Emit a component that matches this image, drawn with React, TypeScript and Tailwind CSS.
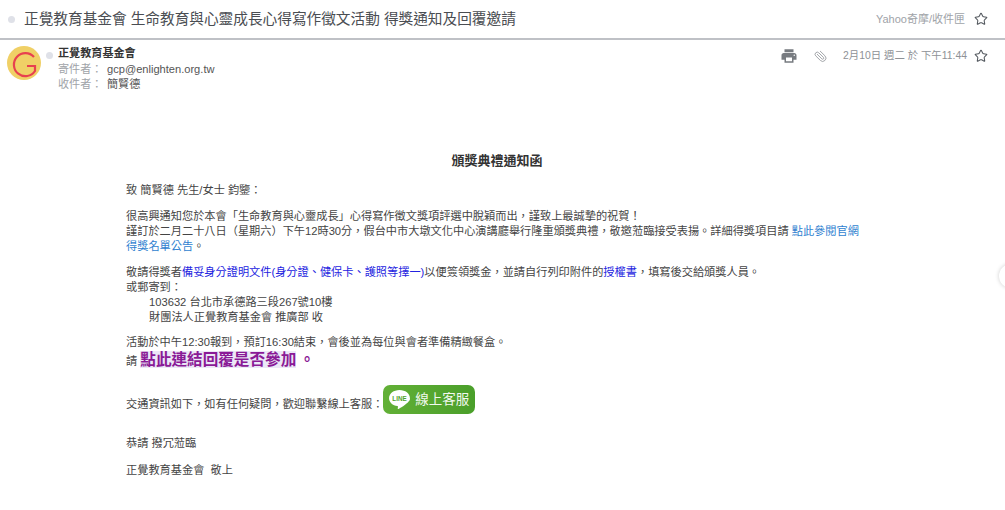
import { Star, Paperclip } from 'lucide-react';

const font = "font-['Liberation_Sans','Noto_Sans_CJK_TC',sans-serif]";

function Avatar() {
  return (
    <svg width="34" height="34" viewBox="0 0 34 34" className="shrink-0">
      <circle cx="17" cy="17" r="17" fill="#f0d066" />
      <path d="M27 11 A11.5 11.500 0 1 0 28 25 L28 20 L20 20" fill="none" stroke="#e8404f" strokeWidth="2.200" />
    </svg>
  );
}

function PrintIcon() {
  return (
    <svg width="18" height="18" viewBox="0 0 24 24" fill="#777b80">
      <path d="M19 8H5c-1.660 0-3 1.340-3 3v6h4v4h12v-4h4v-6c0-1.660-1.340-3-3-3zm-3 11H8v-5h8v5zm3-7c-.55 0-1-.45-1-1s.45-1 1-1 1 .45 1 1-.45 1-1 1zm-1-9H6v4h12V3z" />
    </svg>
  );
}

function LineButton() {
  return (
    <span className="inline-flex items-center w-[92px] h-[29px] rounded-[7px] bg-linear-to-r from-[#62b036] to-[#4a9f2a] pl-[5px] gap-[4px] text-[#f2f8ee] text-[13.500px] align-bottom">
      <svg width="23" height="23" viewBox="0 0 22 22" className="shrink-0">
        <path d="M11 2C5.500 2 1 5.400 1 9.700c0 3.800 3.400 6.900 8 7.600.5.1.6.4.5.8l-.2 1.500c0 .4.3.7.8.4 1.500-.8 7.800-4.600 9.800-7.400C21.100 11.600 21 10.700 21 9.700 21 5.400 16.500 2 11 2z" fill="#fff" />
        <text x="11" y="12" textAnchor="middle" fontSize="6" fontWeight="700" fill="#4ea42b" fontFamily="Liberation Sans">LINE</text>
      </svg>
      線上客服
    </span>
  );
}

export default function App() {
  return (
    <div lang="zh-TW" className={`${font} relative w-[1005px] h-[510px] overflow-hidden bg-white text-[#444]`}>
      {/* Subject */}
      <header className="h-[40px] flex items-center border-b-2 border-[#bfc1c6] pl-[8px] pr-[17px]">
        <span className="w-[7px] h-[7px] rounded-full bg-[#dfe1e8] mr-[9px]" />
        <h1 className="text-[14.670px] font-normal text-[#4a4d52]">正覺教育基金會 生命教育與心靈成長心得寫作徵文活動 得獎通知及回覆邀請</h1>
        <span className="ml-auto text-[11px] text-[#a0a3a8] mr-[9px]">Yahoo奇摩/收件匣</span>
        <Star size={14} strokeWidth={1.800} className="text-[#555a60]" />
      </header>

      {/* Sender row */}
      <section className="flex items-start pl-[7px] pr-[17px] pt-[6px] h-[60px]">
        <Avatar />
        <span className="w-[7px] h-[7px] rounded-full bg-[#dfe1e8] ml-[5px] mt-[6px]" />
        <div className="ml-[5px] text-[11.100px] leading-[15.500px]">
          <div className="font-bold text-[#333]">正覺教育基金會</div>
          <div className="flex text-[#555]">
            <span className="w-[49px] text-[#a0a3a8]">寄件者：</span>gcp@enlighten.org.tw
          </div>
          <div className="flex text-[#555]">
            <span className="w-[49px] text-[#a0a3a8]">收件者：</span>簡賢德
          </div>
        </div>
        <div className="ml-auto flex items-center mt-[1px]">
          <PrintIcon />
          <Paperclip size={13} strokeWidth={1.800} className="text-[#a0a3a8] ml-[16px] -rotate-90" />
          <span className="ml-[16px] text-[10.400px] text-[#8e9196]">2月10日 週二 於 下午11:44</span>
          <Star size={14} strokeWidth={1.800} className="text-[#555a60] ml-[7px]" />
        </div>
      </section>

      {/* Body */}
      <main className="pl-[126px] w-[880px] text-[11.200px] leading-[15px] text-[#444]">
        <h2 className="text-center font-bold text-[13px] leading-[15px] mt-[53px] w-[742px] text-[#333]">頒獎典禮通知函</h2>
        <p className="mt-[15px]">致 簡賢德 先生/女士 鈞鑒：</p>
        <p className="mt-[11px]">
          很高興通知您於本會「生命教育與心靈成長」心得寫作徵文獎項評選中脫穎而出，謹致上最誠摯的祝賀！
          <br />
          謹訂於二月二十八日（星期六）下午12時30分，假台中市大墩文化中心演講廳舉行隆重頒獎典禮，敬邀蒞臨接受表揚。詳細得獎項目請 <span className="text-[#2f7fd0]">點此參閱官網</span>
          <br />
          <span className="text-[#2f7fd0]">得獎名單公告</span>。
        </p>
        <p className="mt-[11px] whitespace-nowrap">
          敬請得獎者<span className="text-[#2323e0]">備妥身分證明文件(身分證、健保卡、護照等擇一)</span>以便簽領獎金，並請自行列印附件的<span className="text-[#2323e0]">授權書</span>，填寫後交給頒獎人員。
          <br />
          或郵寄到：
        </p>
        <div className="pl-[23px]">
          <p>103632 台北市承德路三段267號10樓</p>
          <p>財團法人正覺教育基金會 推廣部 收</p>
        </div>
        <p className="mt-[10px]">活動於中午12:30報到，預訂16:30結束，會後並為每位與會者準備精緻餐盒。</p>
        <p className="leading-[20px]">
          請 <a className="text-[15.600px] font-bold text-[#8a1a96] bg-[#ece8f7]">點此連結回覆是否參加</a> <span className="text-[15.600px] font-bold text-[#8a1a96]">。</span>
        </p>
        <p className="mt-[11px] h-[31px] flex items-end">
          <span className="leading-[15px] pb-[1px]">交通資訊如下，如有任何疑問，歡迎聯繫線上客服：</span>
          <span className="-mb-[1px]"><LineButton /></span>
        </p>
        <p className="mt-[23px]">恭請 撥冗蒞臨</p>
        <p className="mt-[12px]">正覺教育基金會&nbsp; 敬上</p>
      </main>

      {/* Scroll handle */}
      <span className="absolute left-[999px] top-[264px] w-[24px] h-[24px] rounded-full bg-white shadow-[0_0_4px_rgba(0,0,0,0.2)]" />
    </div>
  );
}
